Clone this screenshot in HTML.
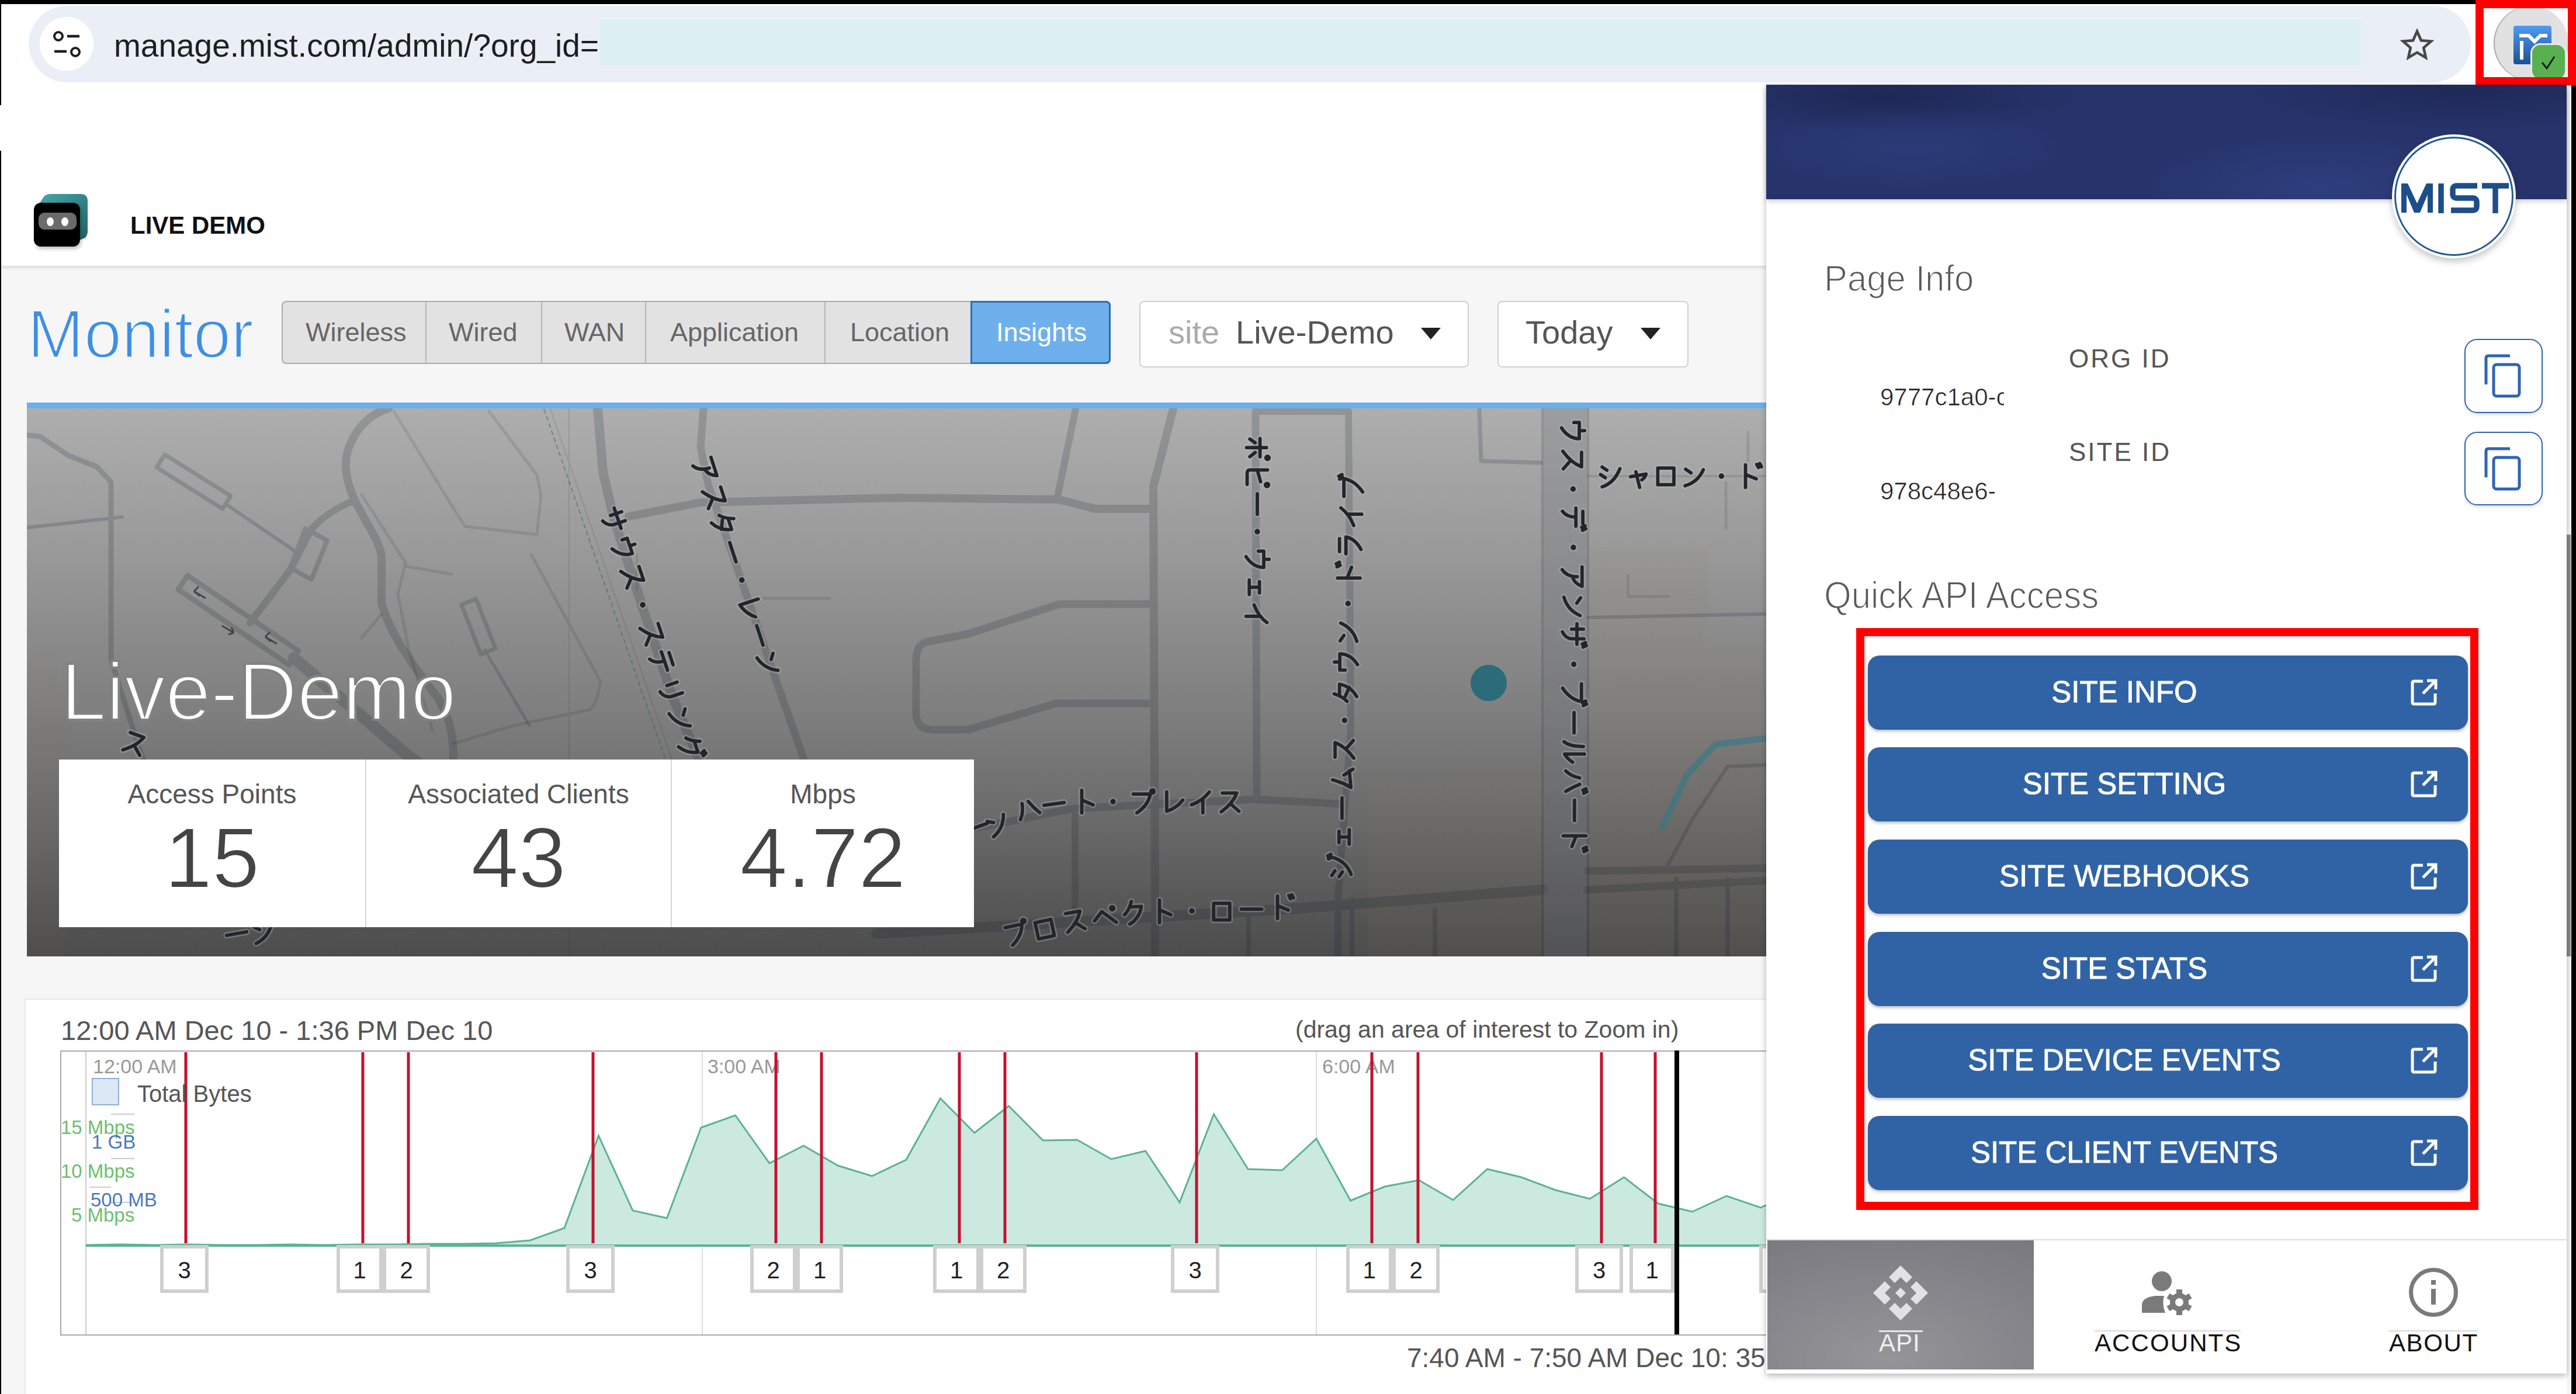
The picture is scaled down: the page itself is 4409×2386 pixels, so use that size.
<!DOCTYPE html>
<html><head><meta charset="utf-8">
<style>
html,body{margin:0;padding:0;}
body{width:4409px;height:2386px;position:relative;overflow:hidden;background:#fff;font-family:"Liberation Sans",sans-serif;}
.a{position:absolute;}
.t{position:absolute;white-space:nowrap;line-height:1;}
</style></head><body>

<!-- page background -->
<div class="a" style="left:0;top:455px;width:4409px;height:1931px;background:#f6f6f6;"></div>
<!-- header white -->
<div class="a" style="left:0;top:142px;width:4409px;height:313px;background:#fff;box-shadow:0 3px 6px rgba(0,0,0,0.12);"></div>

<!-- chrome toolbar -->
<div class="a" style="left:0;top:0;width:4409px;height:142px;background:#fff;"></div>
<div class="a" style="left:0;top:0;width:4409px;height:7px;background:#000;"></div>
<div class="a" style="left:49px;top:10px;width:4180px;height:131px;border-radius:66px;background:#eaeff7;"></div>
<div class="a" style="left:68px;top:29px;width:92px;height:92px;border-radius:50%;background:#fff;"></div>
<svg class="a" style="left:68px;top:29px" width="92" height="92" viewBox="0 0 92 92">
  <circle cx="32" cy="33" r="7" fill="none" stroke="#1f1f1f" stroke-width="4"/>
  <line x1="47" y1="33" x2="68" y2="33" stroke="#1f1f1f" stroke-width="4.5"/>
  <line x1="25" y1="59" x2="46" y2="59" stroke="#1f1f1f" stroke-width="4.5"/>
  <circle cx="61" cy="60" r="7" fill="none" stroke="#1f1f1f" stroke-width="4"/>
</svg>
<div class="t" style="left:195px;top:51px;font-size:55px;color:#1f1f1f;">manage.mist.com/admin/?org_id=</div>
<div class="a" style="left:1027px;top:33px;width:3014px;height:79px;background:#dcf0f2;"></div>
<svg class="a" style="left:4105px;top:45px" width="64" height="64" viewBox="0 0 24 24">
  <path d="M12 3.2 L14.6 9.1 L21 9.6 L16.2 13.8 L17.6 20.1 L12 16.8 L6.4 20.1 L7.8 13.8 L3 9.6 L9.4 9.1 Z" fill="none" stroke="#474747" stroke-width="1.7" stroke-linejoin="miter"/>
</svg>
<!-- left black strips -->
<div class="a" style="left:0;top:0;width:2px;height:180px;background:#000;"></div>
<div class="a" style="left:0;top:258px;width:2px;height:2128px;background:#000;"></div>

<!-- extension icon with red box -->
<div class="a" style="left:4237px;top:0;width:172px;height:146px;background:#f00;"></div>
<div class="a" style="left:4251px;top:14px;width:144px;height:118px;background:#fff;overflow:hidden;">
  <div class="a" style="left:17px;top:-4px;width:128px;height:128px;border-radius:50%;background:#e1e1e1;box-shadow:inset 2px 0 0 #aaa;"></div>
  <div class="a" style="left:51px;top:30px;width:65px;height:66px;border-radius:4px;background:linear-gradient(#4f9bf0,#1d4f96);"></div>
  <svg class="a" style="left:51px;top:30px" width="65" height="66" viewBox="0 0 65 66">
    <path d="M14 58 L14 26" stroke="#fff" stroke-width="6" fill="none"/>
    <path d="M10 17 L26 17 L36 27 L46 17 L58 17" stroke="#fff" stroke-width="6" fill="none"/>
  </svg>
  <div class="a" style="left:83px;top:63px;width:56px;height:58px;border-radius:14px;background:#58b04f;box-shadow:0 0 0 3px #e8e8e8;"></div>
  <svg class="a" style="left:83px;top:63px" width="56" height="56" viewBox="0 0 56 56">
    <path d="M17 30 L25 40 L38 20" stroke="#1b1b1b" stroke-width="3" fill="none"/>
  </svg>
</div>

<!-- header logo -->
<svg class="a" style="left:0;top:300px" width="200" height="150" viewBox="0 300 200 150"><defs><linearGradient id="tl" x1="0" y1="0" x2="1" y2="1"><stop offset="0" stop-color="#4ea8ad"/><stop offset="1" stop-color="#1b6365"/></linearGradient></defs><path d="M60 360 L74 338 Q78 332 86 332 L138 332 Q150 332 150 344 L150 396 Q150 402 146 407 L131 413 L70 413 L60 360 Z" fill="url(#tl)"/></svg>
<div class="a" style="left:58px;top:347px;width:79px;height:75px;border-radius:12px;background:#000;box-shadow:2px 4px 6px rgba(0,0,0,0.25);"></div>
<div class="a" style="left:66px;top:364px;width:65px;height:29px;border-radius:10px;background:#6b6b6b;"></div>
<div class="a" style="left:80px;top:372px;width:12px;height:15px;border-radius:50%;background:#fff;"></div>
<div class="a" style="left:105px;top:372px;width:12px;height:15px;border-radius:50%;background:#fff;"></div>
<div class="t" style="left:223px;top:365px;font-size:42px;font-weight:bold;color:#111;">LIVE DEMO</div>

<!-- Monitor row -->
<div class="t" style="left:47px;top:514px;font-size:116px;color:#3d8fe6;-webkit-text-stroke:3px #f6f6f6;">Monitor</div>
<div class="a" style="left:482px;top:515px;width:1419px;height:108px;border-radius:8px;background:#e2e2e2;border:0;box-shadow:inset 0 0 0 2px #ababab;"></div>
<div class="a" style="left:728px;top:517px;width:2px;height:104px;background:#b5b5b5;"></div>
<div class="a" style="left:926px;top:517px;width:2px;height:104px;background:#b5b5b5;"></div>
<div class="a" style="left:1104px;top:517px;width:2px;height:104px;background:#b5b5b5;"></div>
<div class="a" style="left:1411px;top:517px;width:2px;height:104px;background:#b5b5b5;"></div>
<div class="a" style="left:1661px;top:515px;width:240px;height:108px;border-radius:0 8px 8px 0;background:#6eb0ec;box-shadow:inset 0 0 0 3px #2f6db3;"></div>
<div class="t" style="left:523px;top:546px;font-size:45px;color:#666;">Wireless</div>
<div class="t" style="left:768px;top:546px;font-size:45px;color:#666;">Wired</div>
<div class="t" style="left:966px;top:546px;font-size:45px;color:#666;">WAN</div>
<div class="t" style="left:1147px;top:546px;font-size:45px;color:#666;">Application</div>
<div class="t" style="left:1455px;top:546px;font-size:45px;color:#666;">Location</div>
<div class="t" style="left:1705px;top:546px;font-size:45px;color:#fff;">Insights</div>

<div class="a" style="left:1950px;top:515px;width:564px;height:114px;border-radius:8px;background:#fff;box-shadow:inset 0 0 0 2px #d0d0d0;"></div>
<div class="t" style="left:2000px;top:541px;font-size:56px;color:#aaa;">site</div>
<div class="t" style="left:2115px;top:541px;font-size:56px;color:#555;">Live-Demo</div>
<svg class="a" style="left:2432px;top:561px" width="34" height="20"><path d="M0 0 L34 0 L17 20 Z" fill="#222"/></svg>
<div class="a" style="left:2563px;top:515px;width:327px;height:114px;border-radius:8px;background:#fff;box-shadow:inset 0 0 0 2px #d0d0d0;"></div>
<div class="t" style="left:2611px;top:541px;font-size:56px;color:#555;">Today</div>
<svg class="a" style="left:2808px;top:561px" width="34" height="20"><path d="M0 0 L34 0 L17 20 Z" fill="#222"/></svg>

<!-- map -->
<div class="a" style="left:46px;top:689px;width:2977px;height:10px;background:#6aaeea;"></div>
<div class="a" style="left:46px;top:699px;width:2977px;height:938px;overflow:hidden;background:linear-gradient(#aeaeae 0%,#9a9a9a 25%,#7f7f7f 55%,#6a6a6a 75%,#4c4c4c 100%);">
<svg class="a" style="left:0;top:0" width="2977" height="938" viewBox="46 699 2977 938">
 <!-- beige areas -->
 <path d="M2341 1314 L2420 1340 L2480 1320 L2641 1310 L2641 1637 L2341 1637 Z" fill="#8a7a50" fill-opacity="0.07"/>
 <path d="M2718 937 L2921 937 L2921 1100 L3023 1100 L3023 1637 L2718 1637 Z" fill="#8a7a50" fill-opacity="0.07"/>
 <path d="M46 1120 L90 1110 L130 1300 L110 1637 L46 1637 Z" fill="#8a7a50" fill-opacity="0.06"/>
 <!-- minor roads -->
 <g fill="none" stroke="#141a2a" stroke-linecap="round" stroke-linejoin="round" opacity="0.11">
  <path d="M674,704 L783,881 L796,901 L919,915 L926,847 L919,813 L837,704" stroke-width="5"/>
  <path d="M619,847 L694,963 L681,1017 L700,1113 L740,1250" stroke-width="5"/>
  <path d="M694,969 L773,983" stroke-width="5"/>
  <path d="M619,1092 L653,1051" stroke-width="5"/>
  <path d="M909,949 L1028,1167 Q1020,1210 1008,1215 L878,1242 L776,1273" stroke-width="5"/>
  <path d="M1308,1024 L1420,1024" stroke-width="5"/>
  <path d="M2718,815 L3021,815" stroke-width="4"/>
  <path d="M2992,740 L2992,789 M2954,826 L2954,904" stroke-width="5"/>
  <path d="M1090,950 L1090,1010" stroke-width="4"/>
  <path d="M974,700 L974,1637" stroke-width="2"/>
  <path d="M2786,985 L2787,1021 L2856,1021" stroke-width="5"/>
  <path d="M942,700 L1150,1300" stroke-width="2"/>
 </g>
 <!-- medium roads -->
 <g fill="none" stroke="#141a2a" stroke-linecap="round" stroke-linejoin="round" opacity="0.17">
  <path d="M47,745 L68,747 L118,780 L166,799 L190,825 L190,1129 L237,1277 L262,1345" stroke-width="9"/>
  <path d="M47,903 L209,885" stroke-width="6"/>
  <polygon points="268,800 381,871 395,849 282,778" stroke-width="7"/>
  <path d="M388,864 L503,942" stroke-width="6"/>
  <path d="M608,856 Q560,875 533,906 L495,978 L428,1066" stroke-width="12"/>
  <polygon points="523,905 560,925 533,992 497,972" stroke-width="8"/>
  <polygon points="305,1009 495,1138 511,1114 321,985" stroke-width="9"/>
  <path d="M503,1126 L694,1290 L790,1360" stroke-width="20"/>
  <path d="M665,699 C620,712 590,760 592,800 C595,860 640,900 653,949 L653,1031 C665,1080 700,1130 749,1194 C770,1230 776,1256 776,1297" stroke-width="14"/>
  <polygon points="790,1035 815,1025 848,1110 823,1120" stroke-width="7"/>
  <path d="M830,1113 L906,1242" stroke-width="5"/>
  <path d="M1023,700 L1032,808 L1051,889 L1100,1040 L1152,1195 L1195,1297 L1235,1400" stroke-width="16"/>
  <path d="M1204,700 L1199,765 L1212,829 L1324,1152 L1376,1300 L1400,1380" stroke-width="13"/>
  <path d="M1076,884 L1199,860 L1540,852 L1813,855 L1875,871 L1970,871" stroke-width="14"/>
  <path d="M1841,700 L1810,850" stroke-width="12"/>
  <path d="M2008,700 L1974,833 L1977,1535 L1977,1637" stroke-width="14"/>
  <path d="M1970,1034 L1813,1034 L1657,1085 L1585,1099 Q1568,1105 1568,1130 L1568,1225 Q1570,1249 1600,1249 L1657,1249 L1807,1204 L1970,1204" stroke-width="13"/>
  <path d="M1650,1421 L1837,1384 L2148,1368 L2293,1376" stroke-width="13"/>
  <path d="M1840,1395 L1840,1582" stroke-width="12"/>
  <path d="M2149,704 L2151,1368" stroke-width="13"/>
  <path d="M2149,704 L2308,704 L2312,1250 L2290,1539 L2290,1637" stroke-width="12"/>
  <path d="M1500,1598 L2218,1555 L2641,1523" stroke-width="18"/>
  <path d="M2716,1491 L3030,1486" stroke-width="13"/>
  <path d="M2716,1523 L3030,1507" stroke-width="13"/>
  <path d="M2314,1539 L2314,1637 M2456,1558 L2456,1637 M2869,1505 L2869,1637 M2957,1505 L2957,1637 M2137,1566 L2137,1637" stroke-width="8"/>
  <path d="M2532,700 L2535,789 L2637,792" stroke-width="7"/>
  <path d="M2718,1057 L3021,1051" stroke-width="6"/>
  <path d="M2855,1480 L2898,1400 L2957,1312 L3030,1309" stroke-width="6"/>
 </g>
 <g stroke="#2a2e30" stroke-width="3" fill="none" opacity="0.75"><path d="M332,1012 L352,1024 M332,1012 L340,1004 M332,1012 L342,1020"/><path d="M400,1083 L380,1071 M400,1083 L391,1086 M400,1083 L396,1074"/><path d="M454,1090 L474,1102 M454,1090 L462,1082 M454,1090 L464,1098"/></g>
 <!-- railway -->
 <path d="M931,700 L1139,1300" fill="none" stroke="#2f5a48" stroke-opacity="0.45" stroke-width="2" stroke-dasharray="8 5"/>
 <!-- big road -->
 <path d="M2679,699 L2679,1637" fill="none" stroke="#141a2a" stroke-width="82" stroke-opacity="0.17"/>
 <path d="M2679,699 L2679,1637" fill="none" stroke="#ffffff" stroke-width="74" stroke-opacity="0.09"/>
 <!-- river -->
 <path d="M2845,1416 L2888,1325 L2936,1274 L3030,1263" fill="none" stroke="#2c7a8c" stroke-opacity="0.55" stroke-width="11" stroke-linecap="round" stroke-linejoin="round"/>
 <!-- site dot -->
 <circle cx="2548" cy="1169" r="31" fill="#2b6b7a"/>
<g fill="none" stroke="#c8c8c8" stroke-opacity="0.3" stroke-width="24" stroke-linecap="round" stroke-linejoin="round"><path transform="translate(1051.0,889.0) rotate(71.43293201190993) scale(0.460) translate(-50,-50)" d="M10 36 L90 36 M32 14 L32 58 M68 12 L68 56 Q66 80 42 92"/><path transform="translate(1067.4,937.8) rotate(71.43293201190993) scale(0.460) translate(-50,-50)" d="M50 6 L50 24 M20 26 L20 46 M20 26 L80 26 Q80 66 40 92"/><path transform="translate(1083.8,986.5) rotate(71.43293201190993) scale(0.460) translate(-50,-50)" d="M22 18 L76 18 Q62 56 18 88 M52 58 L84 86"/><path transform="translate(1100.1,1035.2) rotate(71.43293201190993) scale(0.460) translate(-50,-50)" d="M50 50 m-4 0 a4 4 0 1 0 8 0 a4 4 0 1 0 -8 0"/><path transform="translate(1116.5,1084.0) rotate(71.43293201190993) scale(0.460) translate(-50,-50)" d="M22 18 L76 18 Q62 56 18 88 M52 58 L84 86"/><path transform="translate(1132.9,1132.8) rotate(71.43293201190993) scale(0.460) translate(-50,-50)" d="M26 14 L74 14 M14 40 L86 40 M50 40 Q50 74 26 90"/><path transform="translate(1149.2,1181.5) rotate(71.43293201190993) scale(0.460) translate(-50,-50)" d="M28 20 L28 60 M72 14 L72 56 Q70 82 42 92"/><path transform="translate(1165.6,1230.2) rotate(71.43293201190993) scale(0.460) translate(-50,-50)" d="M20 24 L40 38 M18 86 Q66 72 86 26"/><path transform="translate(1182.0,1279.0) rotate(71.43293201190993) scale(0.460) translate(-50,-50)" d="M40 10 Q30 40 12 56 M34 30 L76 30 Q68 70 34 92 M78 6 L84 18 M89 3 L95 15"/><path transform="translate(1208.0,803.0) rotate(71.98023071822286) scale(0.460) translate(-50,-50)" d="M14 18 L86 18 Q76 44 56 52 M50 36 Q50 74 24 92"/><path transform="translate(1223.4,850.4) rotate(71.98023071822286) scale(0.460) translate(-50,-50)" d="M22 18 L76 18 Q62 56 18 88 M52 58 L84 86"/><path transform="translate(1238.9,897.9) rotate(71.98023071822286) scale(0.460) translate(-50,-50)" d="M40 8 Q30 40 12 56 M34 28 L76 28 Q68 70 30 92 M32 50 L64 64"/><path transform="translate(1254.3,945.3) rotate(71.98023071822286) scale(0.460) translate(-50,-50)" d="M12 50 L88 50"/><path transform="translate(1269.7,992.7) rotate(71.98023071822286) scale(0.460) translate(-50,-50)" d="M50 50 m-4 0 a4 4 0 1 0 8 0 a4 4 0 1 0 -8 0"/><path transform="translate(1285.1,1040.1) rotate(71.98023071822286) scale(0.460) translate(-50,-50)" d="M28 14 L28 86 Q66 74 88 44"/><path transform="translate(1300.6,1087.6) rotate(71.98023071822286) scale(0.460) translate(-50,-50)" d="M12 50 L88 50"/><path transform="translate(1316.0,1135.0) rotate(71.98023071822286) scale(0.460) translate(-50,-50)" d="M20 24 L40 38 M18 86 Q66 72 86 26"/><path transform="translate(2152.0,768.0) rotate(90) scale(0.460) translate(-50,-50)" d="M12 40 L80 40 M46 16 L46 90 M28 58 L14 78 M64 58 L80 78 M84 12 m-6 0 a6 6 0 1 0 12 0 a6 6 0 1 0 -12 0"/><path transform="translate(2152.0,815.3) rotate(90) scale(0.460) translate(-50,-50)" d="M26 12 L26 78 Q26 88 40 88 L80 88 M26 50 L70 38 M82 14 m-6 0 a6 6 0 1 0 12 0 a6 6 0 1 0 -12 0"/><path transform="translate(2152.0,862.7) rotate(90) scale(0.460) translate(-50,-50)" d="M12 50 L88 50"/><path transform="translate(2152.0,910.0) rotate(90) scale(0.460) translate(-50,-50)" d="M50 50 m-4 0 a4 4 0 1 0 8 0 a4 4 0 1 0 -8 0"/><path transform="translate(2152.0,957.3) rotate(90) scale(0.460) translate(-50,-50)" d="M50 6 L50 24 M20 26 L20 46 M20 26 L80 26 Q80 66 40 92"/><path transform="translate(2152.0,1004.7) rotate(90) scale(0.460) translate(-50,-50)" d="M30 42 L72 42 M51 42 L51 80 M24 80 L78 80"/><path transform="translate(2152.0,1052.0) rotate(90) scale(0.460) translate(-50,-50)" d="M80 14 Q56 46 14 62 M56 40 L56 92"/><path transform="translate(2294.0,1483.0) rotate(-90) scale(0.460) translate(-50,-50)" d="M16 18 L34 30 M12 46 L30 58 M20 90 Q66 74 82 26 M78 6 L84 18 M89 3 L95 15"/><path transform="translate(2295.5,1433.0) rotate(-90) scale(0.460) translate(-50,-50)" d="M30 42 L72 42 M51 42 L51 80 M24 80 L78 80"/><path transform="translate(2296.9,1383.0) rotate(-90) scale(0.460) translate(-50,-50)" d="M12 50 L88 50"/><path transform="translate(2298.4,1333.0) rotate(-90) scale(0.460) translate(-50,-50)" d="M46 12 Q36 50 18 80 L80 74 M64 54 L86 88"/><path transform="translate(2299.8,1283.0) rotate(-90) scale(0.460) translate(-50,-50)" d="M22 18 L76 18 Q62 56 18 88 M52 58 L84 86"/><path transform="translate(2301.3,1233.0) rotate(-90) scale(0.460) translate(-50,-50)" d="M50 50 m-4 0 a4 4 0 1 0 8 0 a4 4 0 1 0 -8 0"/><path transform="translate(2302.8,1183.0) rotate(-90) scale(0.460) translate(-50,-50)" d="M40 8 Q30 40 12 56 M34 28 L76 28 Q68 70 30 92 M32 50 L64 64"/><path transform="translate(2304.2,1133.0) rotate(-90) scale(0.460) translate(-50,-50)" d="M50 6 L50 24 M20 26 L20 46 M20 26 L80 26 Q80 66 40 92"/><path transform="translate(2305.7,1083.0) rotate(-90) scale(0.460) translate(-50,-50)" d="M20 24 L40 38 M18 86 Q66 72 86 26"/><path transform="translate(2307.2,1033.0) rotate(-90) scale(0.460) translate(-50,-50)" d="M50 50 m-4 0 a4 4 0 1 0 8 0 a4 4 0 1 0 -8 0"/><path transform="translate(2308.6,983.0) rotate(-90) scale(0.460) translate(-50,-50)" d="M36 8 L36 92 M36 44 L76 60 M78 6 L84 18 M89 3 L95 15"/><path transform="translate(2310.1,933.0) rotate(-90) scale(0.460) translate(-50,-50)" d="M26 12 L74 12 M18 36 L80 36 Q74 70 34 92"/><path transform="translate(2311.5,883.0) rotate(-90) scale(0.460) translate(-50,-50)" d="M80 14 Q56 46 14 62 M56 40 L56 92"/><path transform="translate(2313.0,833.0) rotate(-90) scale(0.460) translate(-50,-50)" d="M14 22 L80 22 Q72 64 30 92 M78 6 L84 18 M89 3 L95 15"/><path transform="translate(2692.0,737.0) rotate(90) scale(0.460) translate(-50,-50)" d="M50 6 L50 24 M20 26 L20 46 M20 26 L80 26 Q80 66 40 92"/><path transform="translate(2692.2,787.0) rotate(90) scale(0.460) translate(-50,-50)" d="M22 18 L76 18 Q62 56 18 88 M52 58 L84 86"/><path transform="translate(2692.4,837.0) rotate(90) scale(0.460) translate(-50,-50)" d="M50 50 m-4 0 a4 4 0 1 0 8 0 a4 4 0 1 0 -8 0"/><path transform="translate(2692.6,887.0) rotate(90) scale(0.460) translate(-50,-50)" d="M24 14 L70 14 M12 40 L80 40 M46 40 Q46 74 24 90 M78 6 L84 18 M89 3 L95 15"/><path transform="translate(2692.9,937.0) rotate(90) scale(0.460) translate(-50,-50)" d="M50 50 m-4 0 a4 4 0 1 0 8 0 a4 4 0 1 0 -8 0"/><path transform="translate(2693.1,987.0) rotate(90) scale(0.460) translate(-50,-50)" d="M14 18 L86 18 Q76 44 56 52 M50 36 Q50 74 24 92"/><path transform="translate(2693.3,1037.0) rotate(90) scale(0.460) translate(-50,-50)" d="M20 24 L40 38 M18 86 Q66 72 86 26"/><path transform="translate(2693.5,1087.0) rotate(90) scale(0.460) translate(-50,-50)" d="M8 38 L84 38 M28 14 L28 58 M64 12 L64 58 Q62 80 38 92 M78 6 L84 18 M89 3 L95 15"/><path transform="translate(2693.7,1137.0) rotate(90) scale(0.460) translate(-50,-50)" d="M50 50 m-4 0 a4 4 0 1 0 8 0 a4 4 0 1 0 -8 0"/><path transform="translate(2693.9,1187.0) rotate(90) scale(0.460) translate(-50,-50)" d="M14 22 L80 22 Q72 64 30 92 M78 6 L84 18 M89 3 L95 15"/><path transform="translate(2694.1,1237.0) rotate(90) scale(0.460) translate(-50,-50)" d="M12 50 L88 50"/><path transform="translate(2694.4,1287.0) rotate(90) scale(0.460) translate(-50,-50)" d="M30 16 Q30 66 12 88 M58 12 L58 86 Q76 76 88 56"/><path transform="translate(2694.6,1337.0) rotate(90) scale(0.460) translate(-50,-50)" d="M38 30 Q32 62 12 82 M62 30 Q72 56 88 82 M78 6 L84 18 M89 3 L95 15"/><path transform="translate(2694.8,1387.0) rotate(90) scale(0.460) translate(-50,-50)" d="M12 50 L88 50"/><path transform="translate(2695.0,1437.0) rotate(90) scale(0.460) translate(-50,-50)" d="M36 8 L36 92 M36 44 L76 60 M78 6 L84 18 M89 3 L95 15"/><path transform="translate(2756.0,815.0) rotate(0) scale(0.460) translate(-50,-50)" d="M20 16 L38 28 M14 44 L32 56 M20 90 Q66 74 86 22"/><path transform="translate(2803.6,815.0) rotate(0) scale(0.460) translate(-50,-50)" d="M22 52 L80 42 Q76 56 64 64 M42 34 L56 92"/><path transform="translate(2851.2,815.0) rotate(0) scale(0.460) translate(-50,-50)" d="M20 20 L80 20 L80 82 L20 82 Z"/><path transform="translate(2898.8,815.0) rotate(0) scale(0.460) translate(-50,-50)" d="M20 24 L40 38 M18 86 Q66 72 86 26"/><path transform="translate(2946.4,815.0) rotate(0) scale(0.460) translate(-50,-50)" d="M50 50 m-4 0 a4 4 0 1 0 8 0 a4 4 0 1 0 -8 0"/><path transform="translate(2994.0,815.0) rotate(0) scale(0.460) translate(-50,-50)" d="M36 8 L36 92 M36 44 L76 60 M78 6 L84 18 M89 3 L95 15"/><path transform="translate(1674.0,1415.0) rotate(-20) scale(0.460) translate(-50,-50)" d="M12 50 L88 50"/><path transform="translate(1707.0,1411.0) rotate(-25) scale(0.460) translate(-50,-50)" d="M20 24 L40 38 M18 86 Q66 72 86 26"/><path transform="translate(1758.0,1383.0) rotate(-20) scale(0.460) translate(-50,-50)" d="M38 28 Q32 60 12 82 M62 28 Q72 56 88 82"/><path transform="translate(1804.0,1376.0) rotate(-8) scale(0.460) translate(-50,-50)" d="M12 50 L88 50"/><path transform="translate(1858.0,1372.0) rotate(0) scale(0.460) translate(-50,-50)" d="M36 8 L36 92 M36 44 L78 62"/><path transform="translate(1905.0,1372.0) rotate(0) scale(0.460) translate(-50,-50)" d="M50 50 m-4 0 a4 4 0 1 0 8 0 a4 4 0 1 0 -8 0"/><path transform="translate(1956.0,1372.0) rotate(0) scale(0.460) translate(-50,-50)" d="M14 22 L78 22 Q70 64 28 92 M86 12 m-6 0 a6 6 0 1 0 12 0 a6 6 0 1 0 -12 0"/><path transform="translate(2007.0,1372.0) rotate(0) scale(0.460) translate(-50,-50)" d="M28 14 L28 86 Q66 74 88 44"/><path transform="translate(2056.0,1372.0) rotate(0) scale(0.460) translate(-50,-50)" d="M80 14 Q56 46 14 62 M56 40 L56 92"/><path transform="translate(2105.0,1372.0) rotate(0) scale(0.460) translate(-50,-50)" d="M22 18 L76 18 Q62 56 18 88 M52 58 L84 86"/><path transform="translate(1739.0,1597.0) rotate(-12) scale(0.460) translate(-50,-50)" d="M14 22 L78 22 Q70 64 28 92 M86 12 m-6 0 a6 6 0 1 0 12 0 a6 6 0 1 0 -12 0"/><path transform="translate(1788.0,1590.0) rotate(-12) scale(0.460) translate(-50,-50)" d="M20 20 L80 20 L80 82 L20 82 Z"/><path transform="translate(1839.0,1576.0) rotate(-10) scale(0.460) translate(-50,-50)" d="M22 18 L76 18 Q62 56 18 88 M52 58 L84 86"/><path transform="translate(1891.0,1567.0) rotate(-6) scale(0.460) translate(-50,-50)" d="M10 66 L40 34 L90 80 M80 26 m-6 0 a6 6 0 1 0 12 0 a6 6 0 1 0 -12 0"/><path transform="translate(1942.0,1562.0) rotate(-3) scale(0.460) translate(-50,-50)" d="M40 8 Q30 40 12 56 M34 28 L76 28 Q68 70 30 92"/><path transform="translate(1991.0,1560.0) rotate(0) scale(0.460) translate(-50,-50)" d="M36 8 L36 92 M36 44 L78 62"/><path transform="translate(2040.0,1559.0) rotate(0) scale(0.460) translate(-50,-50)" d="M50 50 m-4 0 a4 4 0 1 0 8 0 a4 4 0 1 0 -8 0"/><path transform="translate(2091.0,1560.0) rotate(0) scale(0.460) translate(-50,-50)" d="M20 20 L80 20 L80 82 L20 82 Z"/><path transform="translate(2142.0,1556.0) rotate(0) scale(0.460) translate(-50,-50)" d="M12 50 L88 50"/><path transform="translate(2193.0,1553.0) rotate(0) scale(0.460) translate(-50,-50)" d="M36 8 L36 92 M36 44 L76 60 M78 6 L84 18 M89 3 L95 15"/><path transform="translate(230.0,1272.0) rotate(20) scale(0.460) translate(-50,-50)" d="M22 18 L76 18 Q62 56 18 88 M52 58 L84 86"/><path transform="translate(405.0,1598.0) rotate(-10) scale(0.460) translate(-50,-50)" d="M12 50 L88 50"/><path transform="translate(450.0,1596.0) rotate(-10) scale(0.460) translate(-50,-50)" d="M20 24 L40 38 M18 86 Q66 72 86 26"/></g><g fill="none" stroke="#22252b" stroke-width="12.5" stroke-linecap="round" stroke-linejoin="round"><path transform="translate(1051.0,889.0) rotate(71.43293201190993) scale(0.460) translate(-50,-50)" d="M10 36 L90 36 M32 14 L32 58 M68 12 L68 56 Q66 80 42 92"/><path transform="translate(1067.4,937.8) rotate(71.43293201190993) scale(0.460) translate(-50,-50)" d="M50 6 L50 24 M20 26 L20 46 M20 26 L80 26 Q80 66 40 92"/><path transform="translate(1083.8,986.5) rotate(71.43293201190993) scale(0.460) translate(-50,-50)" d="M22 18 L76 18 Q62 56 18 88 M52 58 L84 86"/><path transform="translate(1100.1,1035.2) rotate(71.43293201190993) scale(0.460) translate(-50,-50)" d="M50 50 m-4 0 a4 4 0 1 0 8 0 a4 4 0 1 0 -8 0"/><path transform="translate(1116.5,1084.0) rotate(71.43293201190993) scale(0.460) translate(-50,-50)" d="M22 18 L76 18 Q62 56 18 88 M52 58 L84 86"/><path transform="translate(1132.9,1132.8) rotate(71.43293201190993) scale(0.460) translate(-50,-50)" d="M26 14 L74 14 M14 40 L86 40 M50 40 Q50 74 26 90"/><path transform="translate(1149.2,1181.5) rotate(71.43293201190993) scale(0.460) translate(-50,-50)" d="M28 20 L28 60 M72 14 L72 56 Q70 82 42 92"/><path transform="translate(1165.6,1230.2) rotate(71.43293201190993) scale(0.460) translate(-50,-50)" d="M20 24 L40 38 M18 86 Q66 72 86 26"/><path transform="translate(1182.0,1279.0) rotate(71.43293201190993) scale(0.460) translate(-50,-50)" d="M40 10 Q30 40 12 56 M34 30 L76 30 Q68 70 34 92 M78 6 L84 18 M89 3 L95 15"/><path transform="translate(1208.0,803.0) rotate(71.98023071822286) scale(0.460) translate(-50,-50)" d="M14 18 L86 18 Q76 44 56 52 M50 36 Q50 74 24 92"/><path transform="translate(1223.4,850.4) rotate(71.98023071822286) scale(0.460) translate(-50,-50)" d="M22 18 L76 18 Q62 56 18 88 M52 58 L84 86"/><path transform="translate(1238.9,897.9) rotate(71.98023071822286) scale(0.460) translate(-50,-50)" d="M40 8 Q30 40 12 56 M34 28 L76 28 Q68 70 30 92 M32 50 L64 64"/><path transform="translate(1254.3,945.3) rotate(71.98023071822286) scale(0.460) translate(-50,-50)" d="M12 50 L88 50"/><path transform="translate(1269.7,992.7) rotate(71.98023071822286) scale(0.460) translate(-50,-50)" d="M50 50 m-4 0 a4 4 0 1 0 8 0 a4 4 0 1 0 -8 0"/><path transform="translate(1285.1,1040.1) rotate(71.98023071822286) scale(0.460) translate(-50,-50)" d="M28 14 L28 86 Q66 74 88 44"/><path transform="translate(1300.6,1087.6) rotate(71.98023071822286) scale(0.460) translate(-50,-50)" d="M12 50 L88 50"/><path transform="translate(1316.0,1135.0) rotate(71.98023071822286) scale(0.460) translate(-50,-50)" d="M20 24 L40 38 M18 86 Q66 72 86 26"/><path transform="translate(2152.0,768.0) rotate(90) scale(0.460) translate(-50,-50)" d="M12 40 L80 40 M46 16 L46 90 M28 58 L14 78 M64 58 L80 78 M84 12 m-6 0 a6 6 0 1 0 12 0 a6 6 0 1 0 -12 0"/><path transform="translate(2152.0,815.3) rotate(90) scale(0.460) translate(-50,-50)" d="M26 12 L26 78 Q26 88 40 88 L80 88 M26 50 L70 38 M82 14 m-6 0 a6 6 0 1 0 12 0 a6 6 0 1 0 -12 0"/><path transform="translate(2152.0,862.7) rotate(90) scale(0.460) translate(-50,-50)" d="M12 50 L88 50"/><path transform="translate(2152.0,910.0) rotate(90) scale(0.460) translate(-50,-50)" d="M50 50 m-4 0 a4 4 0 1 0 8 0 a4 4 0 1 0 -8 0"/><path transform="translate(2152.0,957.3) rotate(90) scale(0.460) translate(-50,-50)" d="M50 6 L50 24 M20 26 L20 46 M20 26 L80 26 Q80 66 40 92"/><path transform="translate(2152.0,1004.7) rotate(90) scale(0.460) translate(-50,-50)" d="M30 42 L72 42 M51 42 L51 80 M24 80 L78 80"/><path transform="translate(2152.0,1052.0) rotate(90) scale(0.460) translate(-50,-50)" d="M80 14 Q56 46 14 62 M56 40 L56 92"/><path transform="translate(2294.0,1483.0) rotate(-90) scale(0.460) translate(-50,-50)" d="M16 18 L34 30 M12 46 L30 58 M20 90 Q66 74 82 26 M78 6 L84 18 M89 3 L95 15"/><path transform="translate(2295.5,1433.0) rotate(-90) scale(0.460) translate(-50,-50)" d="M30 42 L72 42 M51 42 L51 80 M24 80 L78 80"/><path transform="translate(2296.9,1383.0) rotate(-90) scale(0.460) translate(-50,-50)" d="M12 50 L88 50"/><path transform="translate(2298.4,1333.0) rotate(-90) scale(0.460) translate(-50,-50)" d="M46 12 Q36 50 18 80 L80 74 M64 54 L86 88"/><path transform="translate(2299.8,1283.0) rotate(-90) scale(0.460) translate(-50,-50)" d="M22 18 L76 18 Q62 56 18 88 M52 58 L84 86"/><path transform="translate(2301.3,1233.0) rotate(-90) scale(0.460) translate(-50,-50)" d="M50 50 m-4 0 a4 4 0 1 0 8 0 a4 4 0 1 0 -8 0"/><path transform="translate(2302.8,1183.0) rotate(-90) scale(0.460) translate(-50,-50)" d="M40 8 Q30 40 12 56 M34 28 L76 28 Q68 70 30 92 M32 50 L64 64"/><path transform="translate(2304.2,1133.0) rotate(-90) scale(0.460) translate(-50,-50)" d="M50 6 L50 24 M20 26 L20 46 M20 26 L80 26 Q80 66 40 92"/><path transform="translate(2305.7,1083.0) rotate(-90) scale(0.460) translate(-50,-50)" d="M20 24 L40 38 M18 86 Q66 72 86 26"/><path transform="translate(2307.2,1033.0) rotate(-90) scale(0.460) translate(-50,-50)" d="M50 50 m-4 0 a4 4 0 1 0 8 0 a4 4 0 1 0 -8 0"/><path transform="translate(2308.6,983.0) rotate(-90) scale(0.460) translate(-50,-50)" d="M36 8 L36 92 M36 44 L76 60 M78 6 L84 18 M89 3 L95 15"/><path transform="translate(2310.1,933.0) rotate(-90) scale(0.460) translate(-50,-50)" d="M26 12 L74 12 M18 36 L80 36 Q74 70 34 92"/><path transform="translate(2311.5,883.0) rotate(-90) scale(0.460) translate(-50,-50)" d="M80 14 Q56 46 14 62 M56 40 L56 92"/><path transform="translate(2313.0,833.0) rotate(-90) scale(0.460) translate(-50,-50)" d="M14 22 L80 22 Q72 64 30 92 M78 6 L84 18 M89 3 L95 15"/><path transform="translate(2692.0,737.0) rotate(90) scale(0.460) translate(-50,-50)" d="M50 6 L50 24 M20 26 L20 46 M20 26 L80 26 Q80 66 40 92"/><path transform="translate(2692.2,787.0) rotate(90) scale(0.460) translate(-50,-50)" d="M22 18 L76 18 Q62 56 18 88 M52 58 L84 86"/><path transform="translate(2692.4,837.0) rotate(90) scale(0.460) translate(-50,-50)" d="M50 50 m-4 0 a4 4 0 1 0 8 0 a4 4 0 1 0 -8 0"/><path transform="translate(2692.6,887.0) rotate(90) scale(0.460) translate(-50,-50)" d="M24 14 L70 14 M12 40 L80 40 M46 40 Q46 74 24 90 M78 6 L84 18 M89 3 L95 15"/><path transform="translate(2692.9,937.0) rotate(90) scale(0.460) translate(-50,-50)" d="M50 50 m-4 0 a4 4 0 1 0 8 0 a4 4 0 1 0 -8 0"/><path transform="translate(2693.1,987.0) rotate(90) scale(0.460) translate(-50,-50)" d="M14 18 L86 18 Q76 44 56 52 M50 36 Q50 74 24 92"/><path transform="translate(2693.3,1037.0) rotate(90) scale(0.460) translate(-50,-50)" d="M20 24 L40 38 M18 86 Q66 72 86 26"/><path transform="translate(2693.5,1087.0) rotate(90) scale(0.460) translate(-50,-50)" d="M8 38 L84 38 M28 14 L28 58 M64 12 L64 58 Q62 80 38 92 M78 6 L84 18 M89 3 L95 15"/><path transform="translate(2693.7,1137.0) rotate(90) scale(0.460) translate(-50,-50)" d="M50 50 m-4 0 a4 4 0 1 0 8 0 a4 4 0 1 0 -8 0"/><path transform="translate(2693.9,1187.0) rotate(90) scale(0.460) translate(-50,-50)" d="M14 22 L80 22 Q72 64 30 92 M78 6 L84 18 M89 3 L95 15"/><path transform="translate(2694.1,1237.0) rotate(90) scale(0.460) translate(-50,-50)" d="M12 50 L88 50"/><path transform="translate(2694.4,1287.0) rotate(90) scale(0.460) translate(-50,-50)" d="M30 16 Q30 66 12 88 M58 12 L58 86 Q76 76 88 56"/><path transform="translate(2694.6,1337.0) rotate(90) scale(0.460) translate(-50,-50)" d="M38 30 Q32 62 12 82 M62 30 Q72 56 88 82 M78 6 L84 18 M89 3 L95 15"/><path transform="translate(2694.8,1387.0) rotate(90) scale(0.460) translate(-50,-50)" d="M12 50 L88 50"/><path transform="translate(2695.0,1437.0) rotate(90) scale(0.460) translate(-50,-50)" d="M36 8 L36 92 M36 44 L76 60 M78 6 L84 18 M89 3 L95 15"/><path transform="translate(2756.0,815.0) rotate(0) scale(0.460) translate(-50,-50)" d="M20 16 L38 28 M14 44 L32 56 M20 90 Q66 74 86 22"/><path transform="translate(2803.6,815.0) rotate(0) scale(0.460) translate(-50,-50)" d="M22 52 L80 42 Q76 56 64 64 M42 34 L56 92"/><path transform="translate(2851.2,815.0) rotate(0) scale(0.460) translate(-50,-50)" d="M20 20 L80 20 L80 82 L20 82 Z"/><path transform="translate(2898.8,815.0) rotate(0) scale(0.460) translate(-50,-50)" d="M20 24 L40 38 M18 86 Q66 72 86 26"/><path transform="translate(2946.4,815.0) rotate(0) scale(0.460) translate(-50,-50)" d="M50 50 m-4 0 a4 4 0 1 0 8 0 a4 4 0 1 0 -8 0"/><path transform="translate(2994.0,815.0) rotate(0) scale(0.460) translate(-50,-50)" d="M36 8 L36 92 M36 44 L76 60 M78 6 L84 18 M89 3 L95 15"/><path transform="translate(1674.0,1415.0) rotate(-20) scale(0.460) translate(-50,-50)" d="M12 50 L88 50"/><path transform="translate(1707.0,1411.0) rotate(-25) scale(0.460) translate(-50,-50)" d="M20 24 L40 38 M18 86 Q66 72 86 26"/><path transform="translate(1758.0,1383.0) rotate(-20) scale(0.460) translate(-50,-50)" d="M38 28 Q32 60 12 82 M62 28 Q72 56 88 82"/><path transform="translate(1804.0,1376.0) rotate(-8) scale(0.460) translate(-50,-50)" d="M12 50 L88 50"/><path transform="translate(1858.0,1372.0) rotate(0) scale(0.460) translate(-50,-50)" d="M36 8 L36 92 M36 44 L78 62"/><path transform="translate(1905.0,1372.0) rotate(0) scale(0.460) translate(-50,-50)" d="M50 50 m-4 0 a4 4 0 1 0 8 0 a4 4 0 1 0 -8 0"/><path transform="translate(1956.0,1372.0) rotate(0) scale(0.460) translate(-50,-50)" d="M14 22 L78 22 Q70 64 28 92 M86 12 m-6 0 a6 6 0 1 0 12 0 a6 6 0 1 0 -12 0"/><path transform="translate(2007.0,1372.0) rotate(0) scale(0.460) translate(-50,-50)" d="M28 14 L28 86 Q66 74 88 44"/><path transform="translate(2056.0,1372.0) rotate(0) scale(0.460) translate(-50,-50)" d="M80 14 Q56 46 14 62 M56 40 L56 92"/><path transform="translate(2105.0,1372.0) rotate(0) scale(0.460) translate(-50,-50)" d="M22 18 L76 18 Q62 56 18 88 M52 58 L84 86"/><path transform="translate(1739.0,1597.0) rotate(-12) scale(0.460) translate(-50,-50)" d="M14 22 L78 22 Q70 64 28 92 M86 12 m-6 0 a6 6 0 1 0 12 0 a6 6 0 1 0 -12 0"/><path transform="translate(1788.0,1590.0) rotate(-12) scale(0.460) translate(-50,-50)" d="M20 20 L80 20 L80 82 L20 82 Z"/><path transform="translate(1839.0,1576.0) rotate(-10) scale(0.460) translate(-50,-50)" d="M22 18 L76 18 Q62 56 18 88 M52 58 L84 86"/><path transform="translate(1891.0,1567.0) rotate(-6) scale(0.460) translate(-50,-50)" d="M10 66 L40 34 L90 80 M80 26 m-6 0 a6 6 0 1 0 12 0 a6 6 0 1 0 -12 0"/><path transform="translate(1942.0,1562.0) rotate(-3) scale(0.460) translate(-50,-50)" d="M40 8 Q30 40 12 56 M34 28 L76 28 Q68 70 30 92"/><path transform="translate(1991.0,1560.0) rotate(0) scale(0.460) translate(-50,-50)" d="M36 8 L36 92 M36 44 L78 62"/><path transform="translate(2040.0,1559.0) rotate(0) scale(0.460) translate(-50,-50)" d="M50 50 m-4 0 a4 4 0 1 0 8 0 a4 4 0 1 0 -8 0"/><path transform="translate(2091.0,1560.0) rotate(0) scale(0.460) translate(-50,-50)" d="M20 20 L80 20 L80 82 L20 82 Z"/><path transform="translate(2142.0,1556.0) rotate(0) scale(0.460) translate(-50,-50)" d="M12 50 L88 50"/><path transform="translate(2193.0,1553.0) rotate(0) scale(0.460) translate(-50,-50)" d="M36 8 L36 92 M36 44 L76 60 M78 6 L84 18 M89 3 L95 15"/><path transform="translate(230.0,1272.0) rotate(20) scale(0.460) translate(-50,-50)" d="M22 18 L76 18 Q62 56 18 88 M52 58 L84 86"/><path transform="translate(405.0,1598.0) rotate(-10) scale(0.460) translate(-50,-50)" d="M12 50 L88 50"/><path transform="translate(450.0,1596.0) rotate(-10) scale(0.460) translate(-50,-50)" d="M20 24 L40 38 M18 86 Q66 72 86 26"/></g>
</svg>

</div>
<div class="t" style="left:104px;top:1114px;font-size:140px;color:#fff;-webkit-text-stroke:4px #828282;">Live-Demo</div>
<!-- stats -->
<div class="a" style="left:101px;top:1300px;width:1566px;height:287px;background:#fff;"></div>
<div class="a" style="left:625px;top:1300px;width:2px;height:287px;background:#d8d8d8;"></div>
<div class="a" style="left:1148px;top:1300px;width:2px;height:287px;background:#d8d8d8;"></div>
<div class="t" style="left:101px;width:524px;text-align:center;top:1336px;font-size:46px;color:#555;">Access Points</div>
<div class="t" style="left:627px;width:521px;text-align:center;top:1336px;font-size:46px;color:#555;">Associated Clients</div>
<div class="t" style="left:1150px;width:517px;text-align:center;top:1336px;font-size:46px;color:#555;">Mbps</div>
<div class="t" style="left:101px;width:524px;text-align:center;top:1396px;font-size:146px;color:#444;-webkit-text-stroke:2px #fff;">15</div>
<div class="t" style="left:627px;width:521px;text-align:center;top:1396px;font-size:146px;color:#444;-webkit-text-stroke:2px #fff;">43</div>
<div class="t" style="left:1150px;width:517px;text-align:center;top:1396px;font-size:146px;color:#444;-webkit-text-stroke:2px #fff;">4.72</div>

<!-- chart card -->
<div class="a" style="left:44px;top:1711px;width:4365px;height:700px;background:#fff;box-shadow:0 0 0 2px #e6e6e6;"></div>
<div class="t" style="left:104px;top:1740px;font-size:47px;color:#555;">12:00 AM Dec 10 - 1:36 PM Dec 10</div>
<div class="t" style="left:2217px;top:1742px;font-size:41px;color:#555;">(drag an area of interest to Zoom in)</div>
<div class="a" style="left:103px;top:1798px;width:3000px;height:484px;border:2px solid #aaa;background:#fff;"></div>
<div class="a" style="left:146px;top:1800px;width:2px;height:484px;background:#ccc;"></div>
<div class="a" style="left:1201px;top:1800px;width:2px;height:484px;background:#ddd;"></div>
<div class="a" style="left:2252px;top:1800px;width:2px;height:484px;background:#ddd;"></div>
<div class="t" style="left:159px;top:1808px;font-size:34px;color:#999;">12:00 AM</div>
<div class="t" style="left:1211px;top:1808px;font-size:34px;color:#999;">3:00 AM</div>
<div class="t" style="left:2263px;top:1808px;font-size:34px;color:#999;">6:00 AM</div>
<svg class="a" style="left:0;top:0" width="3110" height="2386">
<polygon points="147,2132 147.0,2131 205.5,2130 264.0,2131 322.5,2130 381.0,2131 439.5,2131 498.0,2130 556.5,2131 615.0,2130 673.5,2130 732.0,2129 790.5,2129 849.0,2128 907.5,2123 966.0,2102 1024.5,1944 1083.0,2072 1141.5,2085 1200.0,1930 1258.5,1909 1317.0,1991 1375.5,1961 1434.0,1995 1492.5,2013 1551.0,1985 1609.5,1880 1668.0,1939 1726.5,1893 1785.0,1952 1843.5,1951 1902.0,1984 1960.5,1970 2019.0,2058 2077.5,1907 2136.0,2001 2194.5,2003 2253.0,1949 2311.5,2055 2370.0,2031 2428.5,2020 2487.0,2054 2545.5,2001 2604.0,2015 2662.5,2037 2721.0,2052 2779.5,2015 2838.0,2060 2896.5,2074 2955.0,2047 3013.5,2067 3072.0,2040 3072.0,2132" fill="#cce9e0"/>
<polyline points="147.0,2131 205.5,2130 264.0,2131 322.5,2130 381.0,2131 439.5,2131 498.0,2130 556.5,2131 615.0,2130 673.5,2130 732.0,2129 790.5,2129 849.0,2128 907.5,2123 966.0,2102 1024.5,1944 1083.0,2072 1141.5,2085 1200.0,1930 1258.5,1909 1317.0,1991 1375.5,1961 1434.0,1995 1492.5,2013 1551.0,1985 1609.5,1880 1668.0,1939 1726.5,1893 1785.0,1952 1843.5,1951 1902.0,1984 1960.5,1970 2019.0,2058 2077.5,1907 2136.0,2001 2194.5,2003 2253.0,1949 2311.5,2055 2370.0,2031 2428.5,2020 2487.0,2054 2545.5,2001 2604.0,2015 2662.5,2037 2721.0,2052 2779.5,2015 2838.0,2060 2896.5,2074 2955.0,2047 3013.5,2067 3072.0,2040" fill="none" stroke="#5bb394" stroke-width="3" stroke-linejoin="miter"/>
<line x1="147" y1="2132" x2="3100" y2="2132" stroke="#5bb394" stroke-width="4"/>
<rect x="315.5" y="1801" width="5" height="327" fill="#c4112f"/>
<rect x="618.5" y="1801" width="5" height="327" fill="#c4112f"/>
<rect x="696.5" y="1801" width="5" height="327" fill="#c4112f"/>
<rect x="1012.5" y="1801" width="5" height="327" fill="#c4112f"/>
<rect x="1325.5" y="1801" width="5" height="327" fill="#c4112f"/>
<rect x="1403.5" y="1801" width="5" height="327" fill="#c4112f"/>
<rect x="1639.5" y="1801" width="5" height="327" fill="#c4112f"/>
<rect x="1717.5" y="1801" width="5" height="327" fill="#c4112f"/>
<rect x="2045.5" y="1801" width="5" height="327" fill="#c4112f"/>
<rect x="2345.5" y="1801" width="5" height="327" fill="#c4112f"/>
<rect x="2424.5" y="1801" width="5" height="327" fill="#c4112f"/>
<rect x="2738.5" y="1801" width="5" height="327" fill="#c4112f"/>
<rect x="2830.5" y="1801" width="5" height="327" fill="#c4112f"/>
<rect x="277" y="2134" width="77" height="76" fill="#fff" stroke="#cfcfcf" stroke-width="6"/>
<text x="315.5" y="2188" font-size="40" text-anchor="middle" fill="#222">3</text>
<rect x="579" y="2134" width="73" height="76" fill="#fff" stroke="#cfcfcf" stroke-width="6"/>
<text x="615.5" y="2188" font-size="40" text-anchor="middle" fill="#222">1</text>
<rect x="658" y="2134" width="75" height="76" fill="#fff" stroke="#cfcfcf" stroke-width="6"/>
<text x="695.5" y="2188" font-size="40" text-anchor="middle" fill="#222">2</text>
<rect x="972" y="2134" width="77" height="76" fill="#fff" stroke="#cfcfcf" stroke-width="6"/>
<text x="1010.5" y="2188" font-size="40" text-anchor="middle" fill="#222">3</text>
<rect x="1287" y="2134" width="73" height="76" fill="#fff" stroke="#cfcfcf" stroke-width="6"/>
<text x="1323.5" y="2188" font-size="40" text-anchor="middle" fill="#222">2</text>
<rect x="1366" y="2134" width="74" height="76" fill="#fff" stroke="#cfcfcf" stroke-width="6"/>
<text x="1403.0" y="2188" font-size="40" text-anchor="middle" fill="#222">1</text>
<rect x="1600" y="2134" width="74" height="76" fill="#fff" stroke="#cfcfcf" stroke-width="6"/>
<text x="1637.0" y="2188" font-size="40" text-anchor="middle" fill="#222">1</text>
<rect x="1680" y="2134" width="74" height="76" fill="#fff" stroke="#cfcfcf" stroke-width="6"/>
<text x="1717.0" y="2188" font-size="40" text-anchor="middle" fill="#222">2</text>
<rect x="2007" y="2134" width="77" height="76" fill="#fff" stroke="#cfcfcf" stroke-width="6"/>
<text x="2045.5" y="2188" font-size="40" text-anchor="middle" fill="#222">3</text>
<rect x="2307" y="2134" width="73" height="76" fill="#fff" stroke="#cfcfcf" stroke-width="6"/>
<text x="2343.5" y="2188" font-size="40" text-anchor="middle" fill="#222">1</text>
<rect x="2386" y="2134" width="75" height="76" fill="#fff" stroke="#cfcfcf" stroke-width="6"/>
<text x="2423.5" y="2188" font-size="40" text-anchor="middle" fill="#222">2</text>
<rect x="2699" y="2134" width="76" height="76" fill="#fff" stroke="#cfcfcf" stroke-width="6"/>
<text x="2737.0" y="2188" font-size="40" text-anchor="middle" fill="#222">3</text>
<rect x="2792" y="2134" width="71" height="76" fill="#fff" stroke="#cfcfcf" stroke-width="6"/>
<text x="2827.5" y="2188" font-size="40" text-anchor="middle" fill="#222">1</text>
<rect x="3014" y="2134" width="77" height="76" fill="#fff" stroke="#cfcfcf" stroke-width="6"/>
<text x="3052.5" y="2188" font-size="40" text-anchor="middle" fill="#222">3</text>
<rect x="2866" y="1798" width="8" height="486" fill="#000"/>
</svg>
<div class="a" style="left:157px;top:1845px;width:43px;height:43px;background:#dce8f5;border:2px solid #8fb0d8;"></div>
<div class="t" style="left:235px;top:1852px;font-size:40px;color:#555;">Total Bytes</div>
<div class="a" style="left:190px;top:1906px;width:40px;height:2px;background:#ccc;"></div>
<div class="a" style="left:190px;top:1982px;width:40px;height:2px;background:#ccc;"></div>
<div class="a" style="left:153px;top:2031px;width:37px;height:2px;background:#ccc;"></div>
<div class="a" style="left:190px;top:2057px;width:40px;height:2px;background:#ccc;"></div>
<div class="t" style="left:104px;top:1913px;font-size:33px;color:#6cc06c;">15 Mbps</div>
<div class="t" style="left:157px;top:1938px;font-size:33px;color:#4b78c0;">1 GB</div>
<div class="t" style="left:104px;top:1988px;font-size:33px;color:#6cc06c;">10 Mbps</div>
<div class="t" style="left:155px;top:2037px;font-size:33px;color:#4b78c0;">500 MB</div>
<div class="t" style="left:122px;top:2063px;font-size:33px;color:#6cc06c;">5 Mbps</div>
<div class="a" style="left:2400px;top:2290px;width:623px;height:70px;overflow:hidden;"><div class="t" style="left:8px;top:11px;font-size:46px;color:#555;">7:40 AM - 7:50 AM Dec 10: 35 Mbps</div></div>

<!-- scrollbar / right strips -->
<div class="a" style="left:4393px;top:146px;width:8px;height:2240px;background:#f6f6f6;"></div>
<div class="a" style="left:4393px;top:915px;width:7px;height:722px;background:#8a8a8a;"></div>
<div class="a" style="left:4401px;top:146px;width:8px;height:2240px;background:#000;"></div>

<div class="a" style="left:3023px;top:145px;width:1370px;height:2206px;background:#fff;box-shadow:0 4px 10px rgba(0,0,0,0.28);"></div>
<div class="a" style="left:3023px;top:145px;width:1370px;height:196px;background:radial-gradient(ellipse 300px 90px at 950px 175px,rgba(52,72,140,0.55),rgba(52,72,140,0) 100%),radial-gradient(ellipse 260px 70px at 250px 110px,rgba(48,66,130,0.5),rgba(48,66,130,0) 100%),radial-gradient(ellipse 350px 60px at 200px 20px,rgba(20,28,60,0.5),rgba(20,28,60,0) 100%),radial-gradient(ellipse 400px 70px at 1200px 10px,rgba(20,28,60,0.45),rgba(20,28,60,0) 100%),#27346c;box-shadow:0 4px 8px rgba(0,0,0,0.18);"></div>
<div class="a" style="left:4094px;top:230px;width:212px;height:212px;border-radius:50%;background:#fff;box-shadow:0 6px 12px rgba(0,0,0,0.22);"></div>
<div class="a" style="left:4102px;top:238px;width:188px;height:188px;border-radius:50%;border:3.5px solid #245a95;box-sizing:border-box;left:4098px;top:234px;width:204px;height:204px;"></div>
<svg class="a" style="left:4090px;top:290px" width="220" height="100" viewBox="4090 290 220 100"><g fill="none" stroke="#1d4e89" stroke-width="9.5" stroke-linejoin="miter" stroke-miterlimit="10"><path d="M4110 364 L4110 314 L4121 314 L4137 348 L4153 314 L4164 314 L4164 364 L4155 364 L4155 333 L4142 364 L4132 364 L4119 333 L4119 364 Z" fill="#1d4e89" stroke="none"/><path d="M4178 314 V365"/><path d="M4240 318 H4205 Q4198 318 4198 325 V332 Q4198 339 4205 339 H4232 Q4239 339 4239 346 V353 Q4239 360 4232 360 H4195"/><path d="M4248 318 H4294 M4271 318 V365"/></g></svg>

<div class="t" style="left:3122px;top:445px;font-size:63px;color:#5a5a5a;-webkit-text-stroke:1.6px #fff;transform:scaleX(0.95);transform-origin:0 0;">Page Info</div>
<div class="t" style="left:3541px;top:592px;font-size:44px;color:#555;letter-spacing:3px;">ORG ID</div>
<div class="a" style="left:3218px;top:657px;width:212px;height:50px;overflow:hidden;"><div class="t" style="left:0;top:2px;font-size:42px;color:#222;-webkit-text-stroke:0.6px #fff;">9777c1a0-cb2a</div></div>
<div class="t" style="left:3541px;top:752px;font-size:44px;color:#555;letter-spacing:3px;">SITE ID</div>
<div class="a" style="left:3218px;top:816px;width:196px;height:50px;overflow:hidden;"><div class="t" style="left:0;top:4px;font-size:42px;color:#222;-webkit-text-stroke:0.6px #fff;">978c48e6-6ef6</div></div>
<div class="a" style="left:4218px;top:580px;width:134px;height:127px;border-radius:22px;box-sizing:border-box;border:2.5px solid #2f64b4;box-shadow:0 3px 5px rgba(0,0,0,0.12);background:#fff;"></div>
<div class="a" style="left:4218px;top:739px;width:134px;height:126px;border-radius:22px;box-sizing:border-box;border:2.5px solid #2f64b4;box-shadow:0 3px 5px rgba(0,0,0,0.12);background:#fff;"></div>
<svg class="a" style="left:4218px;top:580px" width="134" height="127">
  <path d="M37 78 L37 33 Q37 29 41 29 L78 29" fill="none" stroke="#2f64b4" stroke-width="5"/>
  <rect x="50" y="44" width="44" height="54" rx="5" fill="none" stroke="#2f64b4" stroke-width="5"/>
</svg>
<svg class="a" style="left:4218px;top:739px" width="134" height="127">
  <path d="M37 78 L37 33 Q37 29 41 29 L78 29" fill="none" stroke="#2f64b4" stroke-width="5"/>
  <rect x="50" y="44" width="44" height="54" rx="5" fill="none" stroke="#2f64b4" stroke-width="5"/>
</svg>

<div class="t" style="left:3122px;top:986px;font-size:65px;color:#5a5a5a;-webkit-text-stroke:1.6px #fff;transform:scaleX(0.923);transform-origin:0 0;">Quick API Access</div>
<div class="a" style="left:3177px;top:1075px;width:1065px;height:996px;box-sizing:border-box;border:14px solid #f00;"></div>
<div class="a" style="left:3197px;top:1122px;width:1027px;height:127px;border-radius:20px;background:#3063a5;box-shadow:0 3px 5px rgba(0,0,0,0.25);"></div>
<div class="t" style="left:3197px;width:878px;text-align:center;top:1159px;font-size:51px;color:#fff;-webkit-text-stroke:0.9px #fff;">SITE INFO</div>
<svg class="a" style="left:4125px;top:1161px" width="48" height="48" viewBox="0 0 48 48"><path d="M22 5 L7 5 Q4 5 4 8 L4 41 Q4 44 7 44 L40 44 Q43 44 43 41 L43 26" fill="none" stroke="#fff" stroke-width="5"/><path d="M29 4 L44 4 L44 19 M44 4 L22 26" fill="none" stroke="#fff" stroke-width="5"/></svg>
<div class="a" style="left:3197px;top:1279px;width:1027px;height:127px;border-radius:20px;background:#3063a5;box-shadow:0 3px 5px rgba(0,0,0,0.25);"></div>
<div class="t" style="left:3197px;width:878px;text-align:center;top:1316px;font-size:51px;color:#fff;-webkit-text-stroke:0.9px #fff;">SITE SETTING</div>
<svg class="a" style="left:4125px;top:1318px" width="48" height="48" viewBox="0 0 48 48"><path d="M22 5 L7 5 Q4 5 4 8 L4 41 Q4 44 7 44 L40 44 Q43 44 43 41 L43 26" fill="none" stroke="#fff" stroke-width="5"/><path d="M29 4 L44 4 L44 19 M44 4 L22 26" fill="none" stroke="#fff" stroke-width="5"/></svg>
<div class="a" style="left:3197px;top:1437px;width:1027px;height:127px;border-radius:20px;background:#3063a5;box-shadow:0 3px 5px rgba(0,0,0,0.25);"></div>
<div class="t" style="left:3197px;width:878px;text-align:center;top:1474px;font-size:51px;color:#fff;-webkit-text-stroke:0.9px #fff;">SITE WEBHOOKS</div>
<svg class="a" style="left:4125px;top:1476px" width="48" height="48" viewBox="0 0 48 48"><path d="M22 5 L7 5 Q4 5 4 8 L4 41 Q4 44 7 44 L40 44 Q43 44 43 41 L43 26" fill="none" stroke="#fff" stroke-width="5"/><path d="M29 4 L44 4 L44 19 M44 4 L22 26" fill="none" stroke="#fff" stroke-width="5"/></svg>
<div class="a" style="left:3197px;top:1595px;width:1027px;height:127px;border-radius:20px;background:#3063a5;box-shadow:0 3px 5px rgba(0,0,0,0.25);"></div>
<div class="t" style="left:3197px;width:878px;text-align:center;top:1632px;font-size:51px;color:#fff;-webkit-text-stroke:0.9px #fff;">SITE STATS</div>
<svg class="a" style="left:4125px;top:1634px" width="48" height="48" viewBox="0 0 48 48"><path d="M22 5 L7 5 Q4 5 4 8 L4 41 Q4 44 7 44 L40 44 Q43 44 43 41 L43 26" fill="none" stroke="#fff" stroke-width="5"/><path d="M29 4 L44 4 L44 19 M44 4 L22 26" fill="none" stroke="#fff" stroke-width="5"/></svg>
<div class="a" style="left:3197px;top:1752px;width:1027px;height:127px;border-radius:20px;background:#3063a5;box-shadow:0 3px 5px rgba(0,0,0,0.25);"></div>
<div class="t" style="left:3197px;width:878px;text-align:center;top:1789px;font-size:51px;color:#fff;-webkit-text-stroke:0.9px #fff;">SITE DEVICE EVENTS</div>
<svg class="a" style="left:4125px;top:1791px" width="48" height="48" viewBox="0 0 48 48"><path d="M22 5 L7 5 Q4 5 4 8 L4 41 Q4 44 7 44 L40 44 Q43 44 43 41 L43 26" fill="none" stroke="#fff" stroke-width="5"/><path d="M29 4 L44 4 L44 19 M44 4 L22 26" fill="none" stroke="#fff" stroke-width="5"/></svg>
<div class="a" style="left:3197px;top:1910px;width:1027px;height:127px;border-radius:20px;background:#3063a5;box-shadow:0 3px 5px rgba(0,0,0,0.25);"></div>
<div class="t" style="left:3197px;width:878px;text-align:center;top:1947px;font-size:51px;color:#fff;-webkit-text-stroke:0.9px #fff;">SITE CLIENT EVENTS</div>
<svg class="a" style="left:4125px;top:1949px" width="48" height="48" viewBox="0 0 48 48"><path d="M22 5 L7 5 Q4 5 4 8 L4 41 Q4 44 7 44 L40 44 Q43 44 43 41 L43 26" fill="none" stroke="#fff" stroke-width="5"/><path d="M29 4 L44 4 L44 19 M44 4 L22 26" fill="none" stroke="#fff" stroke-width="5"/></svg>

<!-- bottom nav -->
<div class="a" style="left:3023px;top:2121px;width:1370px;height:2px;background:#dcdcdc;"></div>
<div class="a" style="left:3025px;top:2123px;width:456px;height:221px;background:radial-gradient(ellipse 500px 260px at 200px 200px,#959498,#77767d);"></div>
<svg class="a" style="left:3203px;top:2163px" width="100" height="100" viewBox="0 0 100 100">
  <g fill="#e2e2e2">
    <path d="M50 3 L70 23 L60 33 L50 23 L40 33 L30 23 Z"/>
    <path d="M50 97 L70 77 L60 67 L50 77 L40 67 L30 77 Z"/>
    <path d="M3 50 L23 30 L33 40 L23 50 L33 60 L23 70 Z"/>
    <path d="M97 50 L77 30 L67 40 L77 50 L67 60 L77 70 Z"/>
    <path d="M50 41 L59 50 L50 59 L41 50 Z"/>
  </g>
</svg>
<div class="a" style="left:3216px;top:2277px;width:75px;height:3px;background:#e6e6e6;"></div>
<div class="t" style="left:3216px;top:2278px;font-size:42px;color:#f0f0f0;letter-spacing:1px;">API</div>
<svg class="a" style="left:3660px;top:2170px" width="100" height="90" viewBox="0 0 100 90">
  <g fill="#7a7a7a">
    <circle cx="40" cy="23" r="17"/>
    <path d="M6 77 L6 64 Q6 50 30 48 L44 48 Q40 62 46 77 Z"/>
  </g>
  <g transform="translate(70,59)">
    <circle r="16" fill="#7a7a7a"/>
    <g fill="#7a7a7a">
      <rect x="-5" y="-22" width="10" height="44"/>
      <rect x="-5" y="-22" width="10" height="44" transform="rotate(60)"/>
      <rect x="-5" y="-22" width="10" height="44" transform="rotate(120)"/>
    </g>
    <circle r="7" fill="#fff"/>
  </g>
</svg>
<div class="a" style="left:3585px;top:2277px;width:250px;height:2px;background:#d8d8d8;"></div>
<div class="t" style="left:3585px;top:2278px;font-size:42px;color:#111;letter-spacing:2.1px;">ACCOUNTS</div>
<svg class="a" style="left:4120px;top:2167px" width="90" height="90" viewBox="0 0 90 90">
  <circle cx="45" cy="45" r="38.5" fill="none" stroke="#7a7a7a" stroke-width="7"/>
  <rect x="41" y="24" width="8" height="8" fill="#7a7a7a"/>
  <rect x="41" y="39" width="8" height="27" fill="#7a7a7a"/>
</svg>
<div class="a" style="left:4089px;top:2277px;width:152px;height:2px;background:#d8d8d8;"></div>
<div class="t" style="left:4089px;top:2278px;font-size:42px;color:#111;letter-spacing:1.6px;">ABOUT</div>


</body></html>
